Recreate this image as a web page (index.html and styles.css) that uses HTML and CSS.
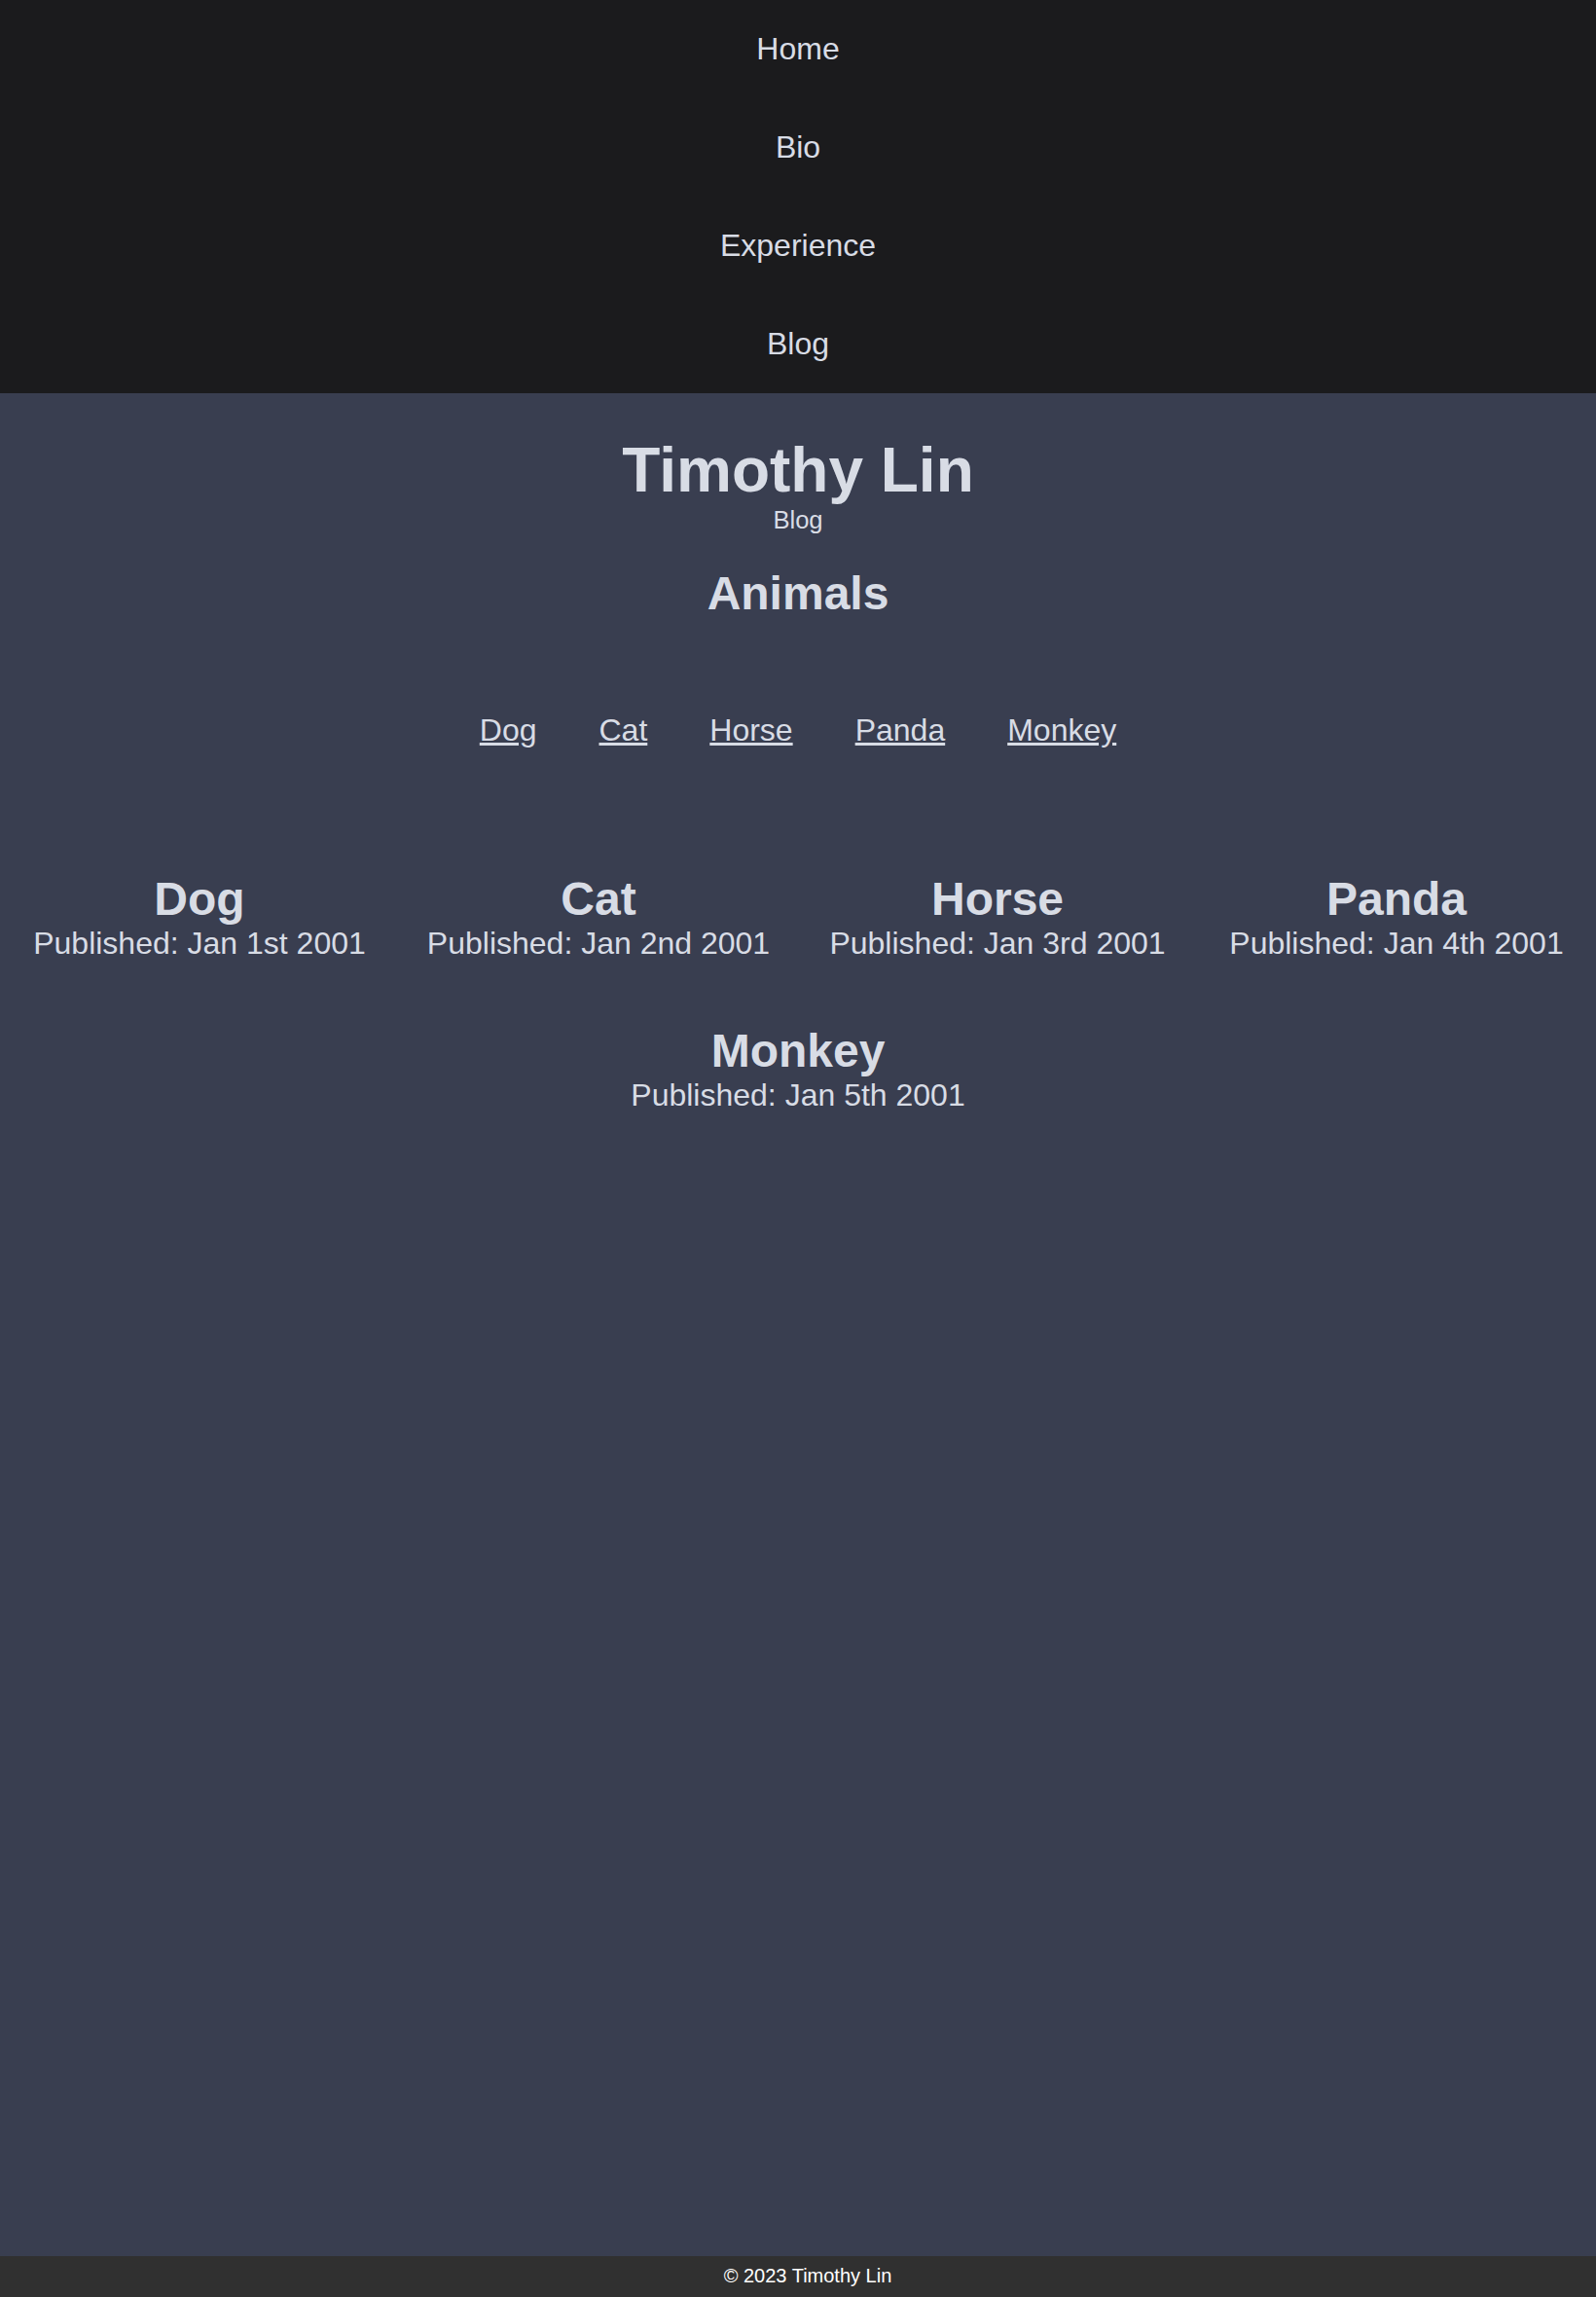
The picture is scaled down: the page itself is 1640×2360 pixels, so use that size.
FILE: index.html
```html
<!DOCTYPE html>
<html lang="en">
<head>
<meta charset="utf-8">
<title>Timothy Lin - Blog</title>
<link rel="stylesheet" href="styles.css">
</head>
<body>
<div class="page">
  <nav class="topnav">
    <a class="nav-item" href="#">Home</a>
    <a class="nav-item" href="#">Bio</a>
    <a class="nav-item" href="#">Experience</a>
    <a class="nav-item" href="#">Blog</a>
  </nav>
  <main class="main">
    <h1 class="title">Timothy Lin</h1>
    <div class="subtitle">Blog</div>
    <h2 class="section">Animals</h2>
    <div class="links">
      <a class="link" href="#">Dog</a>
      <a class="link" href="#">Cat</a>
      <a class="link" href="#">Horse</a>
      <a class="link" href="#">Panda</a>
      <a class="link" href="#">Monkey</a>
    </div>
    <div class="posts">
      <div class="post"><div class="post-title">Dog</div><div class="post-date">Published: Jan 1st 2001</div></div>
      <div class="post"><div class="post-title">Cat</div><div class="post-date">Published: Jan 2nd 2001</div></div>
      <div class="post"><div class="post-title">Horse</div><div class="post-date">Published: Jan 3rd 2001</div></div>
      <div class="post"><div class="post-title">Panda</div><div class="post-date">Published: Jan 4th 2001</div></div>
      <div class="post"><div class="post-title">Monkey</div><div class="post-date">Published: Jan 5th 2001</div></div>
    </div>
  </main>
  <footer class="footer">© 2023 Timothy Lin</footer>
</div>
</body>
</html>
```
FILE: styles.css
```css
html, body {
  margin: 0;
  padding: 0;
}
body {
  font-family: Arial, "Liberation Sans", sans-serif;
  background: #393e50;
  color: #d8dce5;
}
.page {
  min-height: 100vh;
  display: flex;
  flex-direction: column;
}
.topnav {
  background: #1b1b1d;
  display: flex;
  flex-direction: column;
  align-items: stretch;
}
.nav-item {
  display: block;
  text-align: center;
  font-size: 32px;
  padding: 32px 0;
  color: #d8dce5;
  text-decoration: none;
}
.main {
  flex: 1;
  display: flex;
  flex-direction: column;
  align-items: center;
  background: #393e50;
}
.title {
  margin: 42px 0 0;
  font-size: 64px;
  font-weight: bold;
}
.subtitle {
  font-size: 25.6px;
}
.section {
  margin: 33px 0 0;
  font-size: 48px;
  font-weight: bold;
}
.links {
  margin-top: 95px;
  display: flex;
  gap: 64px;
  justify-content: center;
}
.link {
  font-size: 32px;
  color: #d8dce5;
  text-decoration: underline;
}
.posts {
  align-self: stretch;
  margin-top: 95px;
  display: flex;
  flex-wrap: wrap;
  justify-content: center;
}
.post {
  flex: 0 0 25%;
  padding: 32px 0;
  text-align: center;
}
.post-title {
  font-size: 48px;
  font-weight: bold;
}
.post-date {
  font-size: 32px;
}
.footer {
  background: #303030;
  color: #ffffff;
  text-align: center;
  font-size: 20px;
  padding: 9px 0 10px 20px;
}
```
